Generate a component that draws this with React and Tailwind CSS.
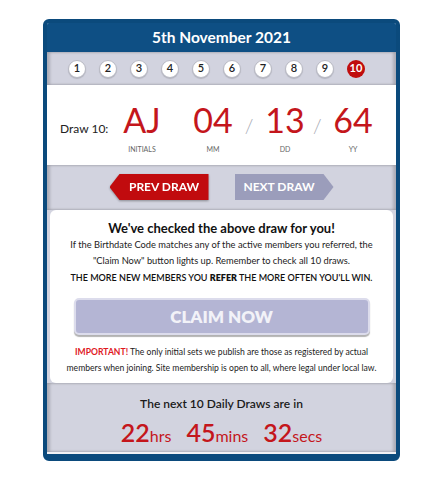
import React from 'react';

const draws = [1, 2, 3, 4, 5, 6, 7, 8, 9, 10];

const App = () => {
  const active = 10;

  return (
    <div className="w-[446px] h-[497px] bg-white pt-[19px] pl-[43px]" style={{ fontFamily: 'Lato, "Noto Sans", sans-serif' }}>
      <div className="w-[357px] h-[442px] rounded-[6px] border-[4px] border-b-[7px] border-[#0b4a7c] bg-[#d2d3df] flex flex-col overflow-hidden">
        {/* Header */}
        <div className="h-[29px] shrink-0 bg-[#0e4f84] flex items-center justify-center text-white text-[15.5px] font-bold">
          5th November 2021
        </div>

        {/* Draw selector */}
        <div className="h-[33px] shrink-0 flex items-center pl-[21px] gap-[13px] shadow-[inset_3px_0_3px_rgba(0,0,0,0.18),inset_-3px_0_3px_rgba(0,0,0,0.18)]">
          {draws.map((n) => (
            <div
              key={n}
              className={
                n === active
                  ? 'w-[18px] h-[18px] rounded-full bg-[#c00d0d] text-white text-[11px] font-bold flex items-center justify-center'
                  : 'w-[18px] h-[18px] rounded-full bg-white border border-[#b9bac4] text-[#222] text-[11px] font-semibold flex items-center justify-center shadow-[0_1px_1px_rgba(0,0,0,0.15)]'
              }
            >
              {n}
            </div>
          ))}
        </div>

        {/* Draw numbers */}
        <div className="h-[80px] shrink-0 bg-white flex items-baseline pl-[13px] pt-[17px]">
          <div className="w-[50px] text-[12px] text-[#222]">Draw 10:</div>
          <div className="w-[64px] flex flex-col items-center">
            <span className="text-[34px] leading-[36px] text-[#c4161c]">AJ</span>
            <span className="text-[7px] text-[#666] mt-[6px]">INITIALS</span>
          </div>
          <div className="w-[11px]"></div>
          <div className="w-[56px] flex flex-col items-center">
            <span className="text-[34px] leading-[36px] text-[#c4161c]">04</span>
            <span className="text-[7px] text-[#666] mt-[6px]">MM</span>
          </div>
          <div className="w-[16px] text-center text-[20px] text-[#a9abb5] font-light">/</div>
          <div className="w-[56px] flex flex-col items-center">
            <span className="text-[34px] leading-[36px] text-[#c4161c]">13</span>
            <span className="text-[7px] text-[#666] mt-[6px]">DD</span>
          </div>
          <div className="w-[8px] text-center text-[20px] text-[#a9abb5] font-light">/</div>
          <div className="w-[64px] flex flex-col items-center">
            <span className="text-[34px] leading-[36px] text-[#c4161c]">64</span>
            <span className="text-[7px] text-[#666] mt-[6px]">YY</span>
          </div>
        </div>

        {/* Prev / Next */}
        <div className="h-[45px] shrink-0 flex justify-center items-start pt-[9px] gap-[26px] shadow-[inset_3px_0_3px_rgba(0,0,0,0.18),inset_-3px_0_3px_rgba(0,0,0,0.18)]">
          <div className="drop-shadow-[0_1px_1px_rgba(0,0,0,0.35)]">
            <div className="w-[99px] h-[26px] bg-[#c10b0e] text-white text-[12px] font-bold flex items-center justify-center pl-[10px] [clip-path:polygon(10px_0,100%_0,100%_100%,10px_100%,0_50%)]">
              PREV DRAW
            </div>
          </div>
          <div className="w-[99px] h-[26px] bg-[#9b9dbb] text-white text-[12px] font-bold flex items-center justify-center pr-[10px] [clip-path:polygon(0_0,calc(100%-10px)_0,100%_50%,calc(100%-10px)_100%,0_100%)]">
            NEXT DRAW
          </div>
        </div>

        {/* Check card */}
        <div className="h-[173px] shrink-0 mx-[3px] bg-white rounded-[6px] flex flex-col items-center pt-[9px]">
          <div className="text-[13px] leading-[18px] font-bold text-[#111]">We've checked the above draw for you!</div>
          <div className="text-[9.3px] leading-[16px] text-[#222] text-center">
            If the Birthdate Code matches any of the active members you referred, the
            <br />
            "Claim Now" button lights up. Remember to check all 10 draws.
          </div>
          <div className="text-[9px] leading-[16px] mt-[1px] font-semibold text-[#111]">
            THE MORE NEW MEMBERS YOU <span className="font-extrabold">REFER</span> THE MORE OFTEN YOU'LL WIN.
          </div>
          <button className="mt-[12px] w-[296px] h-[37px] shrink-0 rounded-[5px] bg-[#b4b5d4] border-2 border-[#dcdcec] shadow-[0_2px_1px_rgba(0,0,0,0.3)] text-[#f2f2f8] text-[17px] font-extrabold">
            CLAIM NOW
          </button>
          <div className="mt-[9px] text-[8.6px] leading-[16px] text-[#222] text-center">
            <span className="text-[#e0191f] font-bold">IMPORTANT!</span> The only initial sets we publish are those as registered by actual
            <br />
            members when joining. Site membership is open to all, where legal under local law.
          </div>
        </div>

        {/* Countdown */}
        <div className="flex-1 flex flex-col items-center pt-[12px] border-b-2 border-[#f1f1f4] shadow-[inset_3px_0_3px_rgba(0,0,0,0.18),inset_-3px_0_3px_rgba(0,0,0,0.18)]">
          <div className="text-[12px] leading-[18px] font-semibold text-[#1a1a1a]">The next 10 Daily Draws are in</div>
          <div className="mt-[5px] flex items-baseline gap-[15px] text-[#c4161c] leading-[28px]">
            <span><span className="text-[25px] font-semibold">22</span><span className="text-[16px]">hrs</span></span>
            <span><span className="text-[25px] font-semibold">45</span><span className="text-[16px]">mins</span></span>
            <span><span className="text-[25px] font-semibold">32</span><span className="text-[16px]">secs</span></span>
          </div>
        </div>
      </div>
    </div>
  );
};

export default App;
